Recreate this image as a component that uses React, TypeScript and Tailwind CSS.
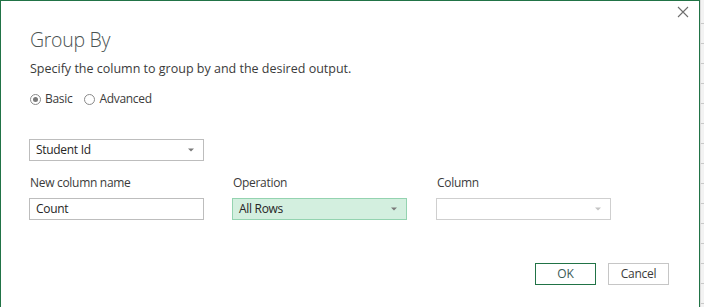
import React from 'react';

const font = { fontFamily: '"Open Sans", "Noto Sans", sans-serif' };

// Small down-pointing triangle used in the combo boxes
const Caret: React.FC<{ light?: boolean }> = ({ light }) => (
  <svg width="6" height="4" viewBox="0 0 6 4" className="shrink-0">
    <path d="M0 0.5h6L3 3.5z" fill={light ? '#c4c4c4' : '#7a7a7a'} />
  </svg>
);

const Radio: React.FC<{ checked?: boolean; label: string }> = ({ checked, label }) => (
  <label className="flex items-center gap-[4px]">
    <span className="w-[11px] h-[11px] rounded-full border border-[#8a8a8a] flex items-center justify-center bg-white">
      {checked && <span className="w-[5px] h-[5px] rounded-full bg-[#7a7a7a]" />}
    </span>
    <span>{label}</span>
  </label>
);

const Field: React.FC<{ value?: string; dropdown?: boolean; selected?: boolean; disabled?: boolean }> = ({
  value,
  dropdown,
  selected,
  disabled,
}) => (
  <div
    className={`w-[175px] h-[22px] flex items-center pl-[6px] pr-[9px] border ${
      selected ? 'bg-[#d3efdf] border-[#94d3b0]' : disabled ? 'bg-white border-[#cfcfcf]' : 'bg-white border-[#bdbdbd]'
    }`}
  >
    <span className="flex-1 text-[12px] tracking-[-0.3px] text-[#262626] leading-none">{value}</span>
    {dropdown && <Caret light={disabled} />}
  </div>
);

export default function App() {
  return (
    <div className="w-[704px] h-[307px] flex bg-white overflow-hidden" style={font}>
      {/* dialog */}
      <div className="w-[700px] h-full border-l border-t border-r border-[#217346] flex flex-col pl-[28px] pr-[29px] text-[#3b3b3b] relative">
        <button className="absolute right-[10px] top-[5px] w-[12px] h-[12px]">
          <svg width="12" height="12" viewBox="0 0 12 12">
            <path d="M1 1L11 11M11 1L1 11" stroke="#6e6e6e" strokeWidth="1.1" />
          </svg>
        </button>

        <div className="mt-[25px] h-[28px] leading-[28px] text-[19.5px] tracking-[-0.3px] font-light text-[#4a5252] pl-[1px]">
          Group By
        </div>
        <div className="mt-[5px] h-[20px] leading-[20px] text-[12.5px] pl-[1px]">
          Specify the column to group by and the desired output.
        </div>

        <div className="mt-[10px] h-[20px] flex items-center gap-[12px] text-[12px] tracking-[-0.3px] pl-[1px]">
          <Radio checked label="Basic" />
          <Radio label="Advanced" />
        </div>

        <div className="mt-[30px]">
          <Field value="Student Id" dropdown />
        </div>

        <div className="mt-[12px] flex text-[12px] tracking-[-0.3px] h-[20px] leading-[20px]">
          <div className="w-[175px] pl-[1px]">New column name</div>
          <div className="w-[175px] ml-[28px] pl-[1px]">Operation</div>
          <div className="w-[175px] ml-[29px] pl-[1px]">Column</div>
        </div>

        <div className="mt-[5px] flex">
          <Field value="Count" />
          <div className="ml-[28px]">
            <Field value="All Rows" dropdown selected />
          </div>
          <div className="ml-[29px]">
            <Field dropdown disabled />
          </div>
        </div>

        <div className="mt-[43px] flex justify-end gap-[12px] pr-[1px]">
          <button className="w-[61px] h-[22px] border border-[#217346] text-[12px] text-[#3a5a55]">OK</button>
          <button className="w-[61px] h-[22px] border border-[#c6c6c6] text-[12px] tracking-[-0.3px] text-[#3b3b3b]">
            Cancel
          </button>
        </div>
      </div>

      {/* spreadsheet edge behind the dialog */}
      <div className="flex-1 bg-[#f3f3f3] border-l border-[#dcdcdc] flex flex-col">
        <div className="h-[24px] shrink-0 border-b border-[#c9c9c9]" />
        {Array.from({ length: 14 }).map((_, i) => (
          <div key={i} className="h-[20px] shrink-0 border-b border-[#c9c9c9]" />
        ))}
      </div>
    </div>
  );
}
